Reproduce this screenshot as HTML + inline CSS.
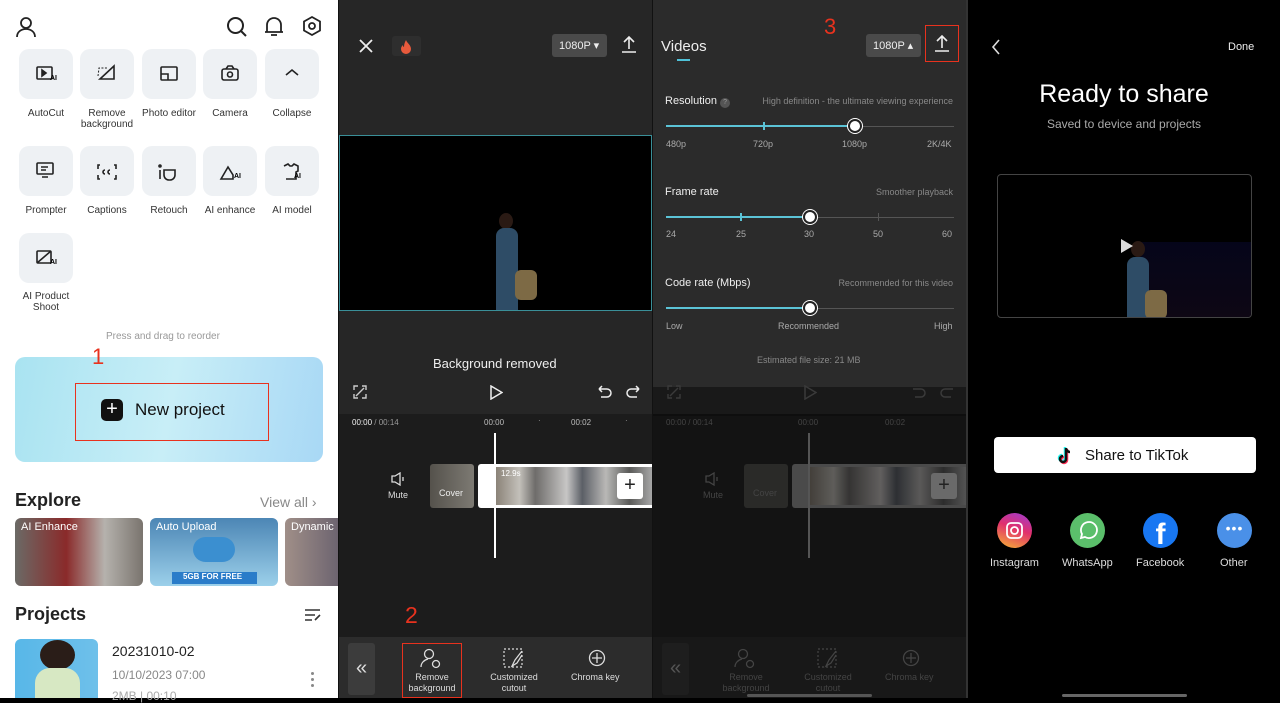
<!DOCTYPE html>
<html><head><meta charset="utf-8"><style>
*{margin:0;padding:0;box-sizing:border-box}
body{width:1280px;height:698px;overflow:hidden;font-family:"Liberation Sans",sans-serif;background:#000;position:relative}
.a{position:absolute}
.t{position:absolute;white-space:nowrap}
.tile{position:absolute;width:54px;height:50px;background:#eef1f4;border-radius:10px}
.lbl{position:absolute;font-size:10px;color:#333;text-align:center;width:70px;line-height:11px}
.red{color:#e8321e;font-size:22px}
</style></head><body>
<!-- Panel 1 -->
<div class="a" style="left:0;top:0;width:338px;height:698px;background:#fff">
<svg class="a" style="left:15px;top:16px" width="22" height="22" viewBox="0 0 22 22" fill="none" stroke="#222" stroke-width="1.8"><circle cx="11" cy="7" r="5"/><path d="M2 21c0-5 4-8 9-8s9 3 9 8"/></svg>
<svg class="a" style="left:226px;top:16px" width="22" height="22" viewBox="0 0 22 22" fill="none" stroke="#222" stroke-width="2"><circle cx="9.5" cy="9.5" r="7.5"/><path d="M15 15l5 5"/></svg>
<svg class="a" style="left:263px;top:15px" width="22" height="22" viewBox="0 0 22 22" fill="none" stroke="#222" stroke-width="1.8"><path d="M4 17V10a7 7 0 0114 0v7zM2 17h18M8 20h6"/></svg>
<svg class="a" style="left:301px;top:15px" width="22" height="22" viewBox="0 0 22 22" fill="none" stroke="#222" stroke-width="1.8"><path d="M11 2l8 4.5v9L11 20l-8-4.5v-9z"/><circle cx="11" cy="11" r="3"/></svg>
<div class="tile" style="left:19px;top:49px"></div><div class="tile" style="left:80px;top:49px"></div><div class="tile" style="left:142px;top:49px"></div><div class="tile" style="left:203px;top:49px"></div><div class="tile" style="left:265px;top:49px"></div>
<div class="tile" style="left:19px;top:146px"></div><div class="tile" style="left:80px;top:146px"></div><div class="tile" style="left:142px;top:146px"></div><div class="tile" style="left:203px;top:146px"></div><div class="tile" style="left:265px;top:146px"></div>
<div class="tile" style="left:19px;top:233px"></div>
<svg class="a" style="left:0;top:0" width="338" height="300" fill="none" stroke="#222" stroke-width="1.6">
<rect x="37" y="67" width="15" height="12" rx="1"/><path d="M42 70l4 3-4 3z" fill="#222"/>
<path d="M100 79l14-13v13z"/><path d="M98 76l1-8h8" stroke-dasharray="2 1.5" stroke-width="1"/>
<rect x="161" y="67" width="16" height="13" rx="1"/><path d="M161 74h7v6"/>
<rect x="222" y="69" width="16" height="11" rx="2"/><path d="M226 69l2-3h4l2 3"/><circle cx="230" cy="74.5" r="2.5"/>
<path d="M286 75l6-5 6 5"/>
<rect x="37" y="163" width="16" height="11" rx="1"/><path d="M41 167h7M41 170h5M42 177h6"/>
<path d="M100 165h-2v4M114 165h2v4M100 179h-2v-4M114 179h2v-4M105 170a2 2 0 100 4M110 170a2 2 0 100 4"/>
<path d="M160 170v9M164 170h11v5a5 5 0 01-5 5h-1a5 5 0 01-5-5z"/><circle cx="160" cy="166" r="1"/>
<path d="M221 179l7-12 5 8v4z"/>
<path d="M284 166l4-2 2 2h2l2-2 4 2v5l-2 1v7h-10"/>
<rect x="37" y="251" width="14" height="12" rx="1"/><path d="M37 263l14-12"/>
</svg>
<div class="t" style="left:50px;top:75px;font-size:7px;font-weight:bold">AI</div>
<div class="t" style="left:234px;top:173px;font-size:7px;font-weight:bold">AI</div>
<div class="t" style="left:294px;top:173px;font-size:7px;font-weight:bold">AI</div>
<div class="t" style="left:50px;top:259px;font-size:7px;font-weight:bold">AI</div>
<div class="lbl" style="left:11px;top:108px">AutoCut</div><div class="lbl" style="left:72px;top:108px">Remove<br>background</div><div class="lbl" style="left:134px;top:108px">Photo editor</div><div class="lbl" style="left:195px;top:108px">Camera</div><div class="lbl" style="left:257px;top:108px">Collapse</div>
<div class="lbl" style="left:11px;top:205px">Prompter</div><div class="lbl" style="left:72px;top:205px">Captions</div><div class="lbl" style="left:134px;top:205px">Retouch</div><div class="lbl" style="left:195px;top:205px">AI enhance</div><div class="lbl" style="left:257px;top:205px">AI model</div>
<div class="lbl" style="left:11px;top:291px">AI Product<br>Shoot</div>
<div class="t" style="left:106px;top:331px;font-size:10px;color:#999">Press and drag to reorder</div>
<div class="a" style="left:15px;top:357px;width:308px;height:105px;border-radius:10px;background:linear-gradient(100deg,#a9e3f1,#c8eef7 50%,#a8d8f5)"></div>
<div class="t red" style="left:92px;top:344px">1</div>
<div class="a" style="left:75px;top:383px;width:194px;height:58px;border:1.5px solid #e8321e"></div>
<div class="a" style="left:101px;top:399px;width:22px;height:22px;background:#111;border-radius:5px;color:#fff;font-size:20px;line-height:21px;text-align:center">+</div>
<div class="t" style="left:135px;top:400px;font-size:17px;color:#111">New project</div>
<div class="t" style="left:15px;top:490px;font-size:18px;font-weight:bold;color:#222">Explore</div>
<div class="t" style="left:260px;top:494px;font-size:14px;color:#888">View all ›</div>
<div class="a" style="left:15px;top:518px;width:128px;height:68px;border-radius:6px;background:linear-gradient(90deg,#6b6a66,#8a2a2a 40%,#b5b2ad 70%,#7a746e)"></div>
<div class="a" style="left:150px;top:518px;width:128px;height:68px;border-radius:6px;background:linear-gradient(180deg,#4c86b5,#9cd0ea)"></div>
<div class="a" style="left:172px;top:572px;width:85px;height:12px;background:#2a7cc9"></div>
<div class="t" style="left:183px;top:572px;font-size:8px;font-weight:bold;color:#fff">5GB FOR FREE</div>
<div class="a" style="left:193px;top:537px;width:42px;height:25px;border-radius:13px;background:#3b8fd0"></div>
<div class="a" style="left:285px;top:518px;width:53px;height:68px;border-radius:6px 0 0 6px;background:linear-gradient(90deg,#a08f88,#6d6470)"></div>
<div class="t" style="left:21px;top:521px;font-size:11px;color:#fff">AI Enhance</div>
<div class="t" style="left:156px;top:521px;font-size:11px;color:#fff">Auto Upload</div>
<div class="t" style="left:291px;top:521px;font-size:11px;color:#fff">Dynamic</div>
<div class="t" style="left:15px;top:604px;font-size:18px;font-weight:bold;color:#222">Projects</div>
<svg class="a" style="left:304px;top:608px" width="18" height="14" stroke="#333" stroke-width="1.6"><path d="M1 2h15M1 7h10M1 12h7M11 12l5-5"/></svg>
<div class="a" style="left:15px;top:639px;width:83px;height:59px;border-radius:6px 6px 0 0;background:linear-gradient(90deg,#58b7e8,#6ec0ea)"></div>
<div class="a" style="left:40px;top:640px;width:35px;height:30px;border-radius:50%;background:#2a1d18"></div>
<div class="a" style="left:35px;top:668px;width:45px;height:30px;border-radius:15px 15px 0 0;background:#d7e8c3"></div>
<div class="t" style="left:112px;top:643px;font-size:14px;color:#222">20231010-02</div>
<div class="t" style="left:112px;top:668px;font-size:12px;color:#888">10/10/2023 07:00</div>
<div class="t" style="left:112px;top:689px;font-size:12px;color:#aaa">2MB | 00:10</div>
<div class="a" style="left:311px;top:672px;width:3px;height:3px;background:#888;border-radius:2px;box-shadow:0 6px #888,0 12px #888"></div>
</div>
<!-- Panel 2 -->
<div class="a" style="left:338px;top:0;width:314px;height:698px;background:#262626;border-left:1px solid #111">
<svg class="a" style="left:19px;top:38px" width="16" height="16" stroke="#eee" stroke-width="1.8"><path d="M2 2l12 12M14 2L2 14"/></svg>
<div class="a" style="left:53px;top:36px;width:29px;height:20px;background:#2e2e2e;border-radius:3px"></div>
<svg class="a" style="left:61px;top:39px" width="13" height="15"><path d="M6 1c1 3 5 5 5 9a5 5 0 01-10 0c0-2 1-3 2-4 0 2 1 2 1 2 0-3 1-5 2-7z" fill="#e85a3c"/></svg>
<div class="a" style="left:213px;top:34px;width:55px;height:23px;background:#4a4a4a;border-radius:3px"></div>
<div class="t" style="left:220px;top:39px;font-size:11px;color:#eee">1080P ▾</div>
<svg class="a" style="left:282px;top:35px" width="16" height="18" stroke="#eee" stroke-width="1.6" fill="none"><path d="M8 14V2M3 7l5-5 5 5M1 17h14"/></svg>
<div class="a" style="left:0;top:135px;width:313px;height:176px;background:#000;border:1.5px solid #3a8f98"></div>
<div class="a" style="left:160px;top:213px;width:14px;height:16px;border-radius:50%;background:#2a1a14"></div>
<div class="a" style="left:157px;top:228px;width:22px;height:82px;border-radius:8px 8px 0 0;background:#2e4c66"></div>
<div class="a" style="left:176px;top:270px;width:22px;height:30px;border-radius:6px;background:#7d6a45"></div>
<div class="t" style="left:94px;top:356px;font-size:13px;color:#eee">Background removed</div>
<svg class="a" style="left:14px;top:385px" width="14" height="14" stroke="#ccc" stroke-width="1.4" fill="none"><path d="M1 5V1h4M13 5V1H9M1 9v4h4M13 9v4H9M3 11l8-8"/></svg>
<svg class="a" style="left:150px;top:385px" width="14" height="15" stroke="#eee" stroke-width="1.5" fill="none"><path d="M2 1l11 6.5L2 14z"/></svg>
<svg class="a" style="left:258px;top:385px" width="44" height="14" stroke="#eee" stroke-width="1.5" fill="none"><path d="M2 4h8a4 4 0 010 8H4M2 4l3-3M2 4l3 3"/><path d="M42 4h-8a4 4 0 000 8h6M42 4l-3-3M42 4l-3 3"/></svg>
<div class="a" style="left:0;top:414px;width:313px;height:223px;background:#1c1c1c"></div>
<div class="t" style="left:13px;top:418px;font-size:8px;color:#eee">00:00 <span style="color:#999">/ 00:14</span></div>
<div class="t" style="left:145px;top:418px;font-size:8px;color:#bbb">00:00</div><div class="t" style="left:232px;top:418px;font-size:8px;color:#bbb">00:02</div>
<div class="t" style="left:199px;top:416px;font-size:8px;color:#999">·</div><div class="t" style="left:286px;top:416px;font-size:8px;color:#999">·</div>
<svg class="a" style="left:52px;top:472px" width="16" height="14" stroke="#ddd" stroke-width="1.3" fill="none"><path d="M1 4h3l5-3v12l-5-3H1zM12 5v4"/></svg>
<div class="t" style="left:49px;top:490px;font-size:9px;color:#ddd">Mute</div>
<div class="a" style="left:91px;top:464px;width:44px;height:44px;background:linear-gradient(90deg,#55524c,#7d7a73);border-radius:3px"></div>
<div class="t" style="left:100px;top:488px;font-size:9px;color:#eee">Cover</div>
<div class="a" style="left:139px;top:464px;width:175px;height:44px;background:#fff;border-radius:3px 0 0 3px"></div>
<div class="a" style="left:157px;top:467px;width:157px;height:38px;background:linear-gradient(90deg,#8b8378,#c3c0ba 15%,#6e6c6a 25%,#c7c6c5 45%,#5b5f66 55%,#b9b8b6 70%,#5a5a58 85%,#aaa)"></div>
<div class="t" style="left:162px;top:469px;font-size:8px;color:#fff">12.9s</div>
<div class="a" style="left:278px;top:473px;width:26px;height:26px;background:#fff;border-radius:3px;font-size:20px;text-align:center;line-height:25px;color:#222">+</div>
<div class="a" style="left:155px;top:433px;width:2px;height:125px;background:#fff"></div>
<div class="t red" style="left:66px;top:602px;font-size:23px">2</div>
<div class="a" style="left:0;top:637px;width:313px;height:61px;background:#2c2c2c"></div>
<div class="a" style="left:9px;top:643px;width:27px;height:52px;background:#3c3c3c;border-radius:3px;color:#ddd;font-size:20px;text-align:center;line-height:50px">«</div>
<div class="a" style="left:63px;top:643px;width:60px;height:55px;border:1.5px solid #e8321e"></div>
<svg class="a" style="left:81px;top:648px" width="22" height="22" stroke="#ddd" stroke-width="1.3" fill="none"><circle cx="9" cy="6" r="4.5"/><path d="M1 19c0-4 3-7 7-8"/><circle cx="16" cy="16" r="3.5"/></svg>
<svg class="a" style="left:164px;top:648px" width="22" height="22" stroke="#ddd" stroke-width="1.2" fill="none"><rect x="1" y="1" width="18" height="18" stroke-dasharray="2 2"/><path d="M19 3l-7 9-3 6 5-3 5-8"/></svg>
<svg class="a" style="left:249px;top:649px" width="18" height="18" stroke="#ddd" stroke-width="1.3" fill="none"><circle cx="9" cy="9" r="7.5"/><path d="M4 9h10M9 4v10"/></svg>
<div class="t" style="left:63px;top:672px;width:60px;text-align:center;font-size:9px;color:#ddd;line-height:11px;white-space:normal">Remove background</div>
<div class="t" style="left:145px;top:672px;width:60px;text-align:center;font-size:9px;color:#ddd;line-height:11px;white-space:normal">Customized cutout</div>
<div class="t" style="left:232px;top:672px;font-size:9px;color:#ddd">Chroma key</div>
</div>
<!-- Panel 3 -->
<div class="a" style="left:652px;top:0;width:314px;height:698px;background:#131313;border-left:1px solid #111">
<div class="a" style="left:0;top:0;width:313px;height:387px;background:#2b2b2b"></div>
<div class="a" style="left:0;top:387px;width:313px;height:27px;background:#191919"></div>
<svg class="a" style="left:14px;top:385px" width="14" height="14" stroke="#3a3a3a" stroke-width="1.4" fill="none"><path d="M1 5V1h4M13 5V1H9M1 9v4h4M13 9v4H9M3 11l8-8"/></svg>
<svg class="a" style="left:150px;top:385px" width="14" height="15" stroke="#3a3a3a" stroke-width="1.5" fill="none"><path d="M2 1l11 6.5L2 14z"/></svg>
<svg class="a" style="left:258px;top:385px" width="44" height="14" stroke="#3a3a3a" stroke-width="1.5" fill="none"><path d="M2 4h8a4 4 0 010 8H4"/><path d="M42 4h-8a4 4 0 000 8h6"/></svg>
<div class="t red" style="left:171px;top:14px;font-size:22px">3</div>
<div class="t" style="left:8px;top:38px;font-size:15px;color:#eee">Videos</div>
<div class="a" style="left:24px;top:59px;width:13px;height:2px;background:#4fc1d8"></div>
<div class="a" style="left:213px;top:34px;width:55px;height:23px;background:#4a4a4a;border-radius:3px"></div>
<div class="t" style="left:220px;top:39px;font-size:11px;color:#eee">1080P ▴</div>
<div class="a" style="left:272px;top:25px;width:34px;height:37px;border:1.5px solid #e8321e"></div>
<svg class="a" style="left:281px;top:34px" width="16" height="18" stroke="#eee" stroke-width="1.6" fill="none"><path d="M8 14V2M3 7l5-5 5 5M1 17h14"/></svg>
<div class="t" style="left:12px;top:95px;font-size:11px;color:#eee">Resolution <span style="display:inline-block;width:10px;height:10px;border-radius:5px;background:#555;font-size:7px;text-align:center;color:#999;line-height:10px">?</span></div>
<div class="t" style="right:13px;top:96px;font-size:9px;color:#888">High definition - the ultimate viewing experience</div>
<div class="a" style="left:13px;top:126px;width:288px;height:1px;background:#555"></div>
<div class="a" style="left:13px;top:125px;width:190px;height:2px;background:#5bc3d6"></div>
<div class="a" style="left:110px;top:122px;width:1.5px;height:8px;background:#5bc3d6"></div>
<div class="a" style="left:195px;top:119px;width:14px;height:14px;border-radius:7px;background:#fff;border:2.5px solid #222;box-shadow:0 0 0 1px #fff"></div>
<div class="t" style="left:13px;top:139px;font-size:9px;color:#aaa">480p</div><div class="t" style="left:100px;top:139px;font-size:9px;color:#aaa">720p</div><div class="t" style="left:189px;top:139px;font-size:9px;color:#aaa">1080p</div><div class="t" style="left:274px;top:139px;font-size:9px;color:#aaa">2K/4K</div>
<div class="t" style="left:12px;top:186px;font-size:11px;color:#eee">Frame rate</div>
<div class="t" style="right:13px;top:187px;font-size:9px;color:#888">Smoother playback</div>
<div class="a" style="left:13px;top:217px;width:288px;height:1px;background:#555"></div>
<div class="a" style="left:13px;top:216px;width:144px;height:2px;background:#5bc3d6"></div>
<div class="a" style="left:87px;top:213px;width:1.5px;height:8px;background:#5bc3d6"></div>
<div class="a" style="left:225px;top:213px;width:1px;height:8px;background:#555"></div>
<div class="a" style="left:150px;top:210px;width:14px;height:14px;border-radius:7px;background:#fff;border:2.5px solid #222;box-shadow:0 0 0 1px #fff"></div>
<div class="t" style="left:13px;top:229px;font-size:9px;color:#aaa">24</div><div class="t" style="left:83px;top:229px;font-size:9px;color:#aaa">25</div><div class="t" style="left:151px;top:229px;font-size:9px;color:#aaa">30</div><div class="t" style="left:220px;top:229px;font-size:9px;color:#aaa">50</div><div class="t" style="left:289px;top:229px;font-size:9px;color:#aaa">60</div>
<div class="t" style="left:12px;top:277px;font-size:11px;color:#eee">Code rate (Mbps)</div>
<div class="t" style="right:13px;top:278px;font-size:9px;color:#888">Recommended for this video</div>
<div class="a" style="left:13px;top:308px;width:288px;height:1px;background:#555"></div>
<div class="a" style="left:13px;top:307px;width:144px;height:2px;background:#5bc3d6"></div>
<div class="a" style="left:150px;top:301px;width:14px;height:14px;border-radius:7px;background:#fff;border:2.5px solid #222;box-shadow:0 0 0 1px #fff"></div>
<div class="t" style="left:13px;top:321px;font-size:9px;color:#aaa">Low</div><div class="t" style="left:125px;top:321px;font-size:9px;color:#aaa">Recommended</div><div class="t" style="left:281px;top:321px;font-size:9px;color:#aaa">High</div>
<div class="t" style="left:104px;top:355px;font-size:9px;color:#888">Estimated file size: 21 MB</div>
<div class="a" style="left:0;top:414px;width:313px;height:2px;background:#0e0e0e"></div>
<div class="t" style="left:13px;top:418px;font-size:8px;color:#444">00:00 / 00:14</div>
<div class="t" style="left:145px;top:418px;font-size:8px;color:#444">00:00</div><div class="t" style="left:232px;top:418px;font-size:8px;color:#444">00:02</div>
<svg class="a" style="left:52px;top:472px" width="16" height="14" stroke="#444" stroke-width="1.3" fill="none"><path d="M1 4h3l5-3v12l-5-3H1zM12 5v4"/></svg>
<div class="t" style="left:50px;top:490px;font-size:9px;color:#444">Mute</div>
<div class="a" style="left:91px;top:464px;width:44px;height:44px;background:#2a2a28;border-radius:3px"></div>
<div class="t" style="left:100px;top:488px;font-size:9px;color:#444">Cover</div>
<div class="a" style="left:139px;top:464px;width:175px;height:44px;background:#4a4a4a;border-radius:3px 0 0 3px"></div>
<div class="a" style="left:157px;top:467px;width:157px;height:38px;background:linear-gradient(90deg,#433f3a,#5e5d5a 15%,#353433 25%,#615f5e 45%,#2d2f33 55%,#5a5958 70%,#2c2c2c 85%,#555)"></div>
<div class="a" style="left:278px;top:473px;width:26px;height:26px;background:#6a6a6a;border-radius:3px;font-size:20px;text-align:center;line-height:25px;color:#222">+</div>
<div class="a" style="left:155px;top:433px;width:2px;height:125px;background:#555"></div>
<div class="a" style="left:0;top:637px;width:313px;height:61px;background:#181818"></div>
<div class="a" style="left:9px;top:643px;width:27px;height:52px;background:#1e1e1e;border-radius:3px;color:#555;font-size:20px;text-align:center;line-height:50px">«</div>
<svg class="a" style="left:81px;top:648px" width="22" height="22" stroke="#444" stroke-width="1.3" fill="none"><circle cx="9" cy="6" r="4.5"/><path d="M1 19c0-4 3-7 7-8"/><circle cx="16" cy="16" r="3.5"/></svg>
<svg class="a" style="left:164px;top:648px" width="22" height="22" stroke="#444" stroke-width="1.2" fill="none"><rect x="1" y="1" width="18" height="18" stroke-dasharray="2 2"/><path d="M19 3l-7 9-3 6 5-3 5-8"/></svg>
<svg class="a" style="left:249px;top:649px" width="18" height="18" stroke="#444" stroke-width="1.3" fill="none"><circle cx="9" cy="9" r="7.5"/><path d="M4 9h10M9 4v10"/></svg>
<div class="t" style="left:63px;top:672px;width:60px;text-align:center;font-size:9px;color:#444;line-height:11px;white-space:normal">Remove background</div>
<div class="t" style="left:145px;top:672px;width:60px;text-align:center;font-size:9px;color:#444;line-height:11px;white-space:normal">Customized cutout</div>
<div class="t" style="left:232px;top:672px;font-size:9px;color:#444">Chroma key</div>
<div class="a" style="left:94px;top:694px;width:125px;height:3px;background:#555;border-radius:2px"></div>
</div>
<!-- Panel 4 -->
<div class="a" style="left:966px;top:0;width:314px;height:698px;background:#000;border-left:2px solid #333">
<svg class="a" style="left:23px;top:39px" width="10" height="16" stroke="#ddd" stroke-width="1.6" fill="none"><path d="M8 1L2 8l6 7"/></svg>
<div class="t" style="left:260px;top:41px;font-size:11px;color:#eee">Done</div>
<div class="t" style="left:0;width:312px;text-align:center;top:80px;font-size:25px;color:#fff">Ready to share</div>
<div class="t" style="left:0;width:312px;text-align:center;top:117px;font-size:12px;color:#aaa">Saved to device and projects</div>
<div class="a" style="left:29px;top:174px;width:255px;height:144px;border:1px solid #444;border-radius:4px;background:#000;overflow:hidden">
<div class="a" style="left:140px;top:67px;width:115px;height:77px;background:linear-gradient(180deg,#05051a,#0e0714)"></div>
<div class="a" style="left:133px;top:66px;width:14px;height:16px;border-radius:50%;background:#2a1a14"></div>
<div class="a" style="left:129px;top:82px;width:22px;height:62px;border-radius:8px 8px 0 0;background:#2e4c66"></div>
<div class="a" style="left:147px;top:115px;width:22px;height:29px;border-radius:6px;background:#7d6a45"></div>
<svg class="a" style="left:122px;top:63px" width="14" height="16"><path d="M1 1l12 7-12 7z" fill="#ddd"/></svg>
</div>
<div class="a" style="left:26px;top:437px;width:262px;height:36px;background:#fff;border-radius:4px"></div>
<svg class="a" style="left:89px;top:446px" width="18" height="20"><path d="M9 2v11a3 3 0 11-3-3" stroke="#25f4ee" stroke-width="2.5" fill="none" transform="translate(-1,-1)"/><path d="M9 2v11a3 3 0 11-3-3" stroke="#fe2c55" stroke-width="2.5" fill="none" transform="translate(1,1)"/><path d="M9 2v11a3 3 0 11-3-3M9 2c0 2 2 4 4 4" stroke="#111" stroke-width="2.5" fill="none"/></svg>
<div class="t" style="left:117px;top:447px;font-size:15px;color:#111">Share to TikTok</div>
<div class="a" style="left:29px;top:513px;width:35px;height:35px;border-radius:50%;background:linear-gradient(20deg,#f7b733,#e1306c 55%,#9b3dd6)"></div>
<svg class="a" style="left:37px;top:521px" width="19" height="19" stroke="#fff" stroke-width="1.8" fill="none"><rect x="2" y="2" width="15" height="15" rx="4"/><circle cx="9.5" cy="9.5" r="3.5"/></svg>
<div class="a" style="left:102px;top:513px;width:35px;height:35px;border-radius:50%;background:#5bbf6b"></div>
<svg class="a" style="left:109px;top:520px" width="21" height="21" stroke="#fff" stroke-width="1.8" fill="none"><path d="M4 18l1-4a8 8 0 113 3z"/></svg>
<div class="a" style="left:175px;top:513px;width:35px;height:35px;border-radius:50%;background:#1877f2;overflow:hidden;color:#fff;font-weight:bold;font-size:30px;text-align:center;line-height:44px">f</div>
<div class="a" style="left:249px;top:513px;width:35px;height:35px;border-radius:50%;background:#4a90e8;color:#fff;font-size:14px;text-align:center;line-height:30px;letter-spacing:1px">•••</div>
<div class="t" style="left:22px;top:557px;font-size:11px;color:#ddd">Instagram</div>
<div class="t" style="left:94px;top:557px;font-size:11px;color:#ddd">WhatsApp</div>
<div class="t" style="left:168px;top:557px;font-size:11px;color:#ddd">Facebook</div>
<div class="t" style="left:252px;top:557px;font-size:11px;color:#ddd">Other</div>
<div class="a" style="left:94px;top:694px;width:125px;height:3px;background:#666;border-radius:2px"></div>
</div>
</body></html>
